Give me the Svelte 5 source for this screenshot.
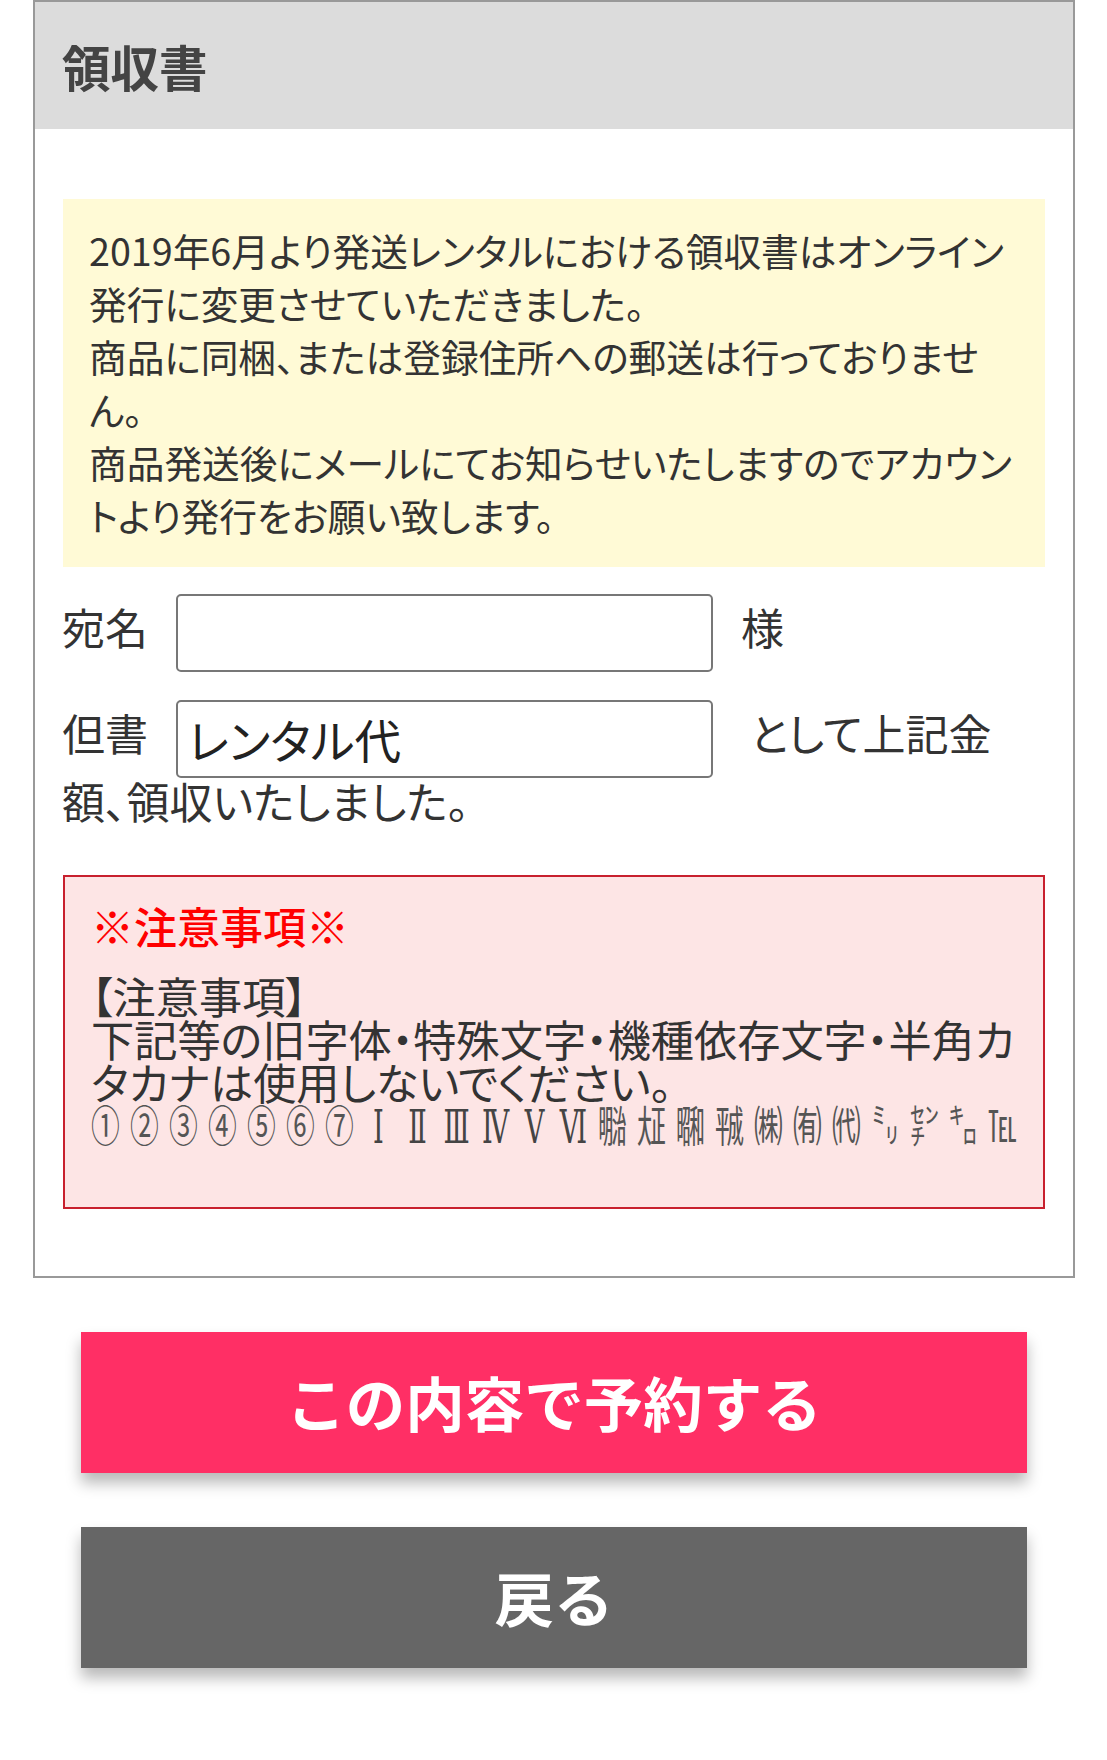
<script>
    const oldChars = [
        '①', '②', '③', '④', '⑤', '⑥', '⑦',
        'Ⅰ', 'Ⅱ', 'Ⅲ', 'Ⅳ', 'Ⅴ', 'Ⅵ',
        '㍾', '㍽', '㍼', '㍻', '㈱', '㈲', '㈹', '㍉', '㌢', '㌔', '℡'
    ];
    const isRoman = ch => 'ⅠⅡⅢⅣⅤⅥ'.includes(ch);
</script>

<div class="page">
    <section class="receipt">
        <h2>領収書</h2>
        <div class="body">
            <p class="notice">2019年6月より発送レンタルにおける領収書はオンライン発行に変更させていただきました。<br />商品に同梱、または登録住所への郵送は行っておりません。<br />商品発送後にメールにてお知らせいたしますのでアカウントより発行をお願い致します。</p>

            <div class="row first">
                <label class="name" for="atena">宛名</label>
                <input id="atena" type="text" />
                <span class="suffix">様</span>
            </div>
            <div class="row second">
                <label class="name" for="tadashi">但書</label>
                <input id="tadashi" type="text" value="レンタル代" />
                <span class="suffix wide">として上記金</span>
            </div>
            <p class="tail">額、領収いたしました。</p>

            <div class="caution">
                <h3>※注意事項※</h3>
                <p>【注意事項】<br />下記等の旧字体・特殊文字・機種依存文字・半角カタカナは使用しないでください。</p>
                <div class="chars">
                    {#each oldChars as ch}
                        <span class:roman={isRoman(ch)}>{ch}</span>
                    {/each}
                </div>
            </div>
        </div>
    </section>

    <div class="actions">
        <button class="btn reserve">この内容で予約する</button>
        <button class="btn back">戻る</button>
    </div>
</div>

<style>
    :global(body) {
        background: #fff;
    }

    .page {
        width: 1107px;
        height: 1760px;
        overflow: hidden;
        box-sizing: border-box;
        padding: 0 32px 0 33px;
        font-family: "Noto Sans CJK JP", "Noto Sans", sans-serif;
        font-feature-settings: "palt";
        color: #333;
    }

    .receipt {
        border: 2px solid #999;
        height: 1278px;
        box-sizing: border-box;
    }

    h2 {
        margin: 0;
        height: 127px;
        padding-left: 27px;
        background: #dcdcdc;
        color: #444;
        font-size: 48.5px;
        font-weight: 700;
        line-height: 128px;
    }

    .body {
        padding: 70px 28px 0;
    }

    .notice {
        margin: 0;
        padding: 24px 25px 26px 26px;
        background: #fffad6;
        font-size: 37.7px;
        line-height: 53px;
    }

    .row {
        display: flex;
        align-items: center;
        height: 78px;
        font-size: 43px;
    }

    .row.first {
        margin-top: 27px;
    }

    .row.second {
        margin-top: 28px;
    }

    .name {
        width: 113px;
        flex: none;
        margin-top: -14px;
        margin-left: -1px;
        margin-right: 1px;
    }

    input {
        width: 537px;
        height: 78px;
        flex: none;
        box-sizing: border-box;
        padding: 0 10px 2px;
        border: 2px solid #777;
        border-radius: 5px;
        background: #fff;
        color: #222;
        font-family: inherit;
        font-feature-settings: "palt";
        font-size: 46.5px;
    }

    .suffix {
        margin-left: 28px;
        margin-top: -14px;
    }

    .suffix.wide {
        margin-left: 37px;
    }

    .tail {
        margin: 0 0 0 -1px;
        font-size: 43px;
        line-height: 44px;
    }

    .caution {
        margin-top: 53px;
        height: 334px;
        box-sizing: border-box;
        padding: 18px 26px 0;
        border: 2px solid #c8202e;
        background: #fde5e5;
    }

    h3 {
        margin: 0 0 19px;
        color: #f00;
        font-size: 43px;
        font-weight: 500;
        line-height: 60px;
    }

    .caution p {
        margin: 0;
        font-size: 43.2px;
        line-height: 43px;
    }

    .chars {
        display: grid;
        grid-template-columns: repeat(24, 39px);
        margin-left: -5px;
        height: 40px;
        color: #555;
        font-size: 32px;
        line-height: 40px;
        text-align: center;
    }

    .chars span {
        display: block;
        transform: scale(0.9, 1.35);
    }

    .chars .roman {
        font-family: "DejaVu Serif", serif;
        color: #444;
        transform: translateY(4px) scale(0.85, 1.45);
    }

    .actions {
        display: flex;
        flex-direction: column;
        gap: 54px;
        padding: 54px 48px 0;
    }

    .btn {
        height: 141px;
        padding-bottom: 4px;
        border: none;
        box-shadow: 0 10px 14px rgba(0, 0, 0, 0.28);
        color: #fff;
        font-family: inherit;
        font-feature-settings: normal;
        font-size: 59.5px;
        font-weight: 700;
    }

    .reserve {
        background: #ff2f65;
    }

    .back {
        background: #666;
    }
</style>
